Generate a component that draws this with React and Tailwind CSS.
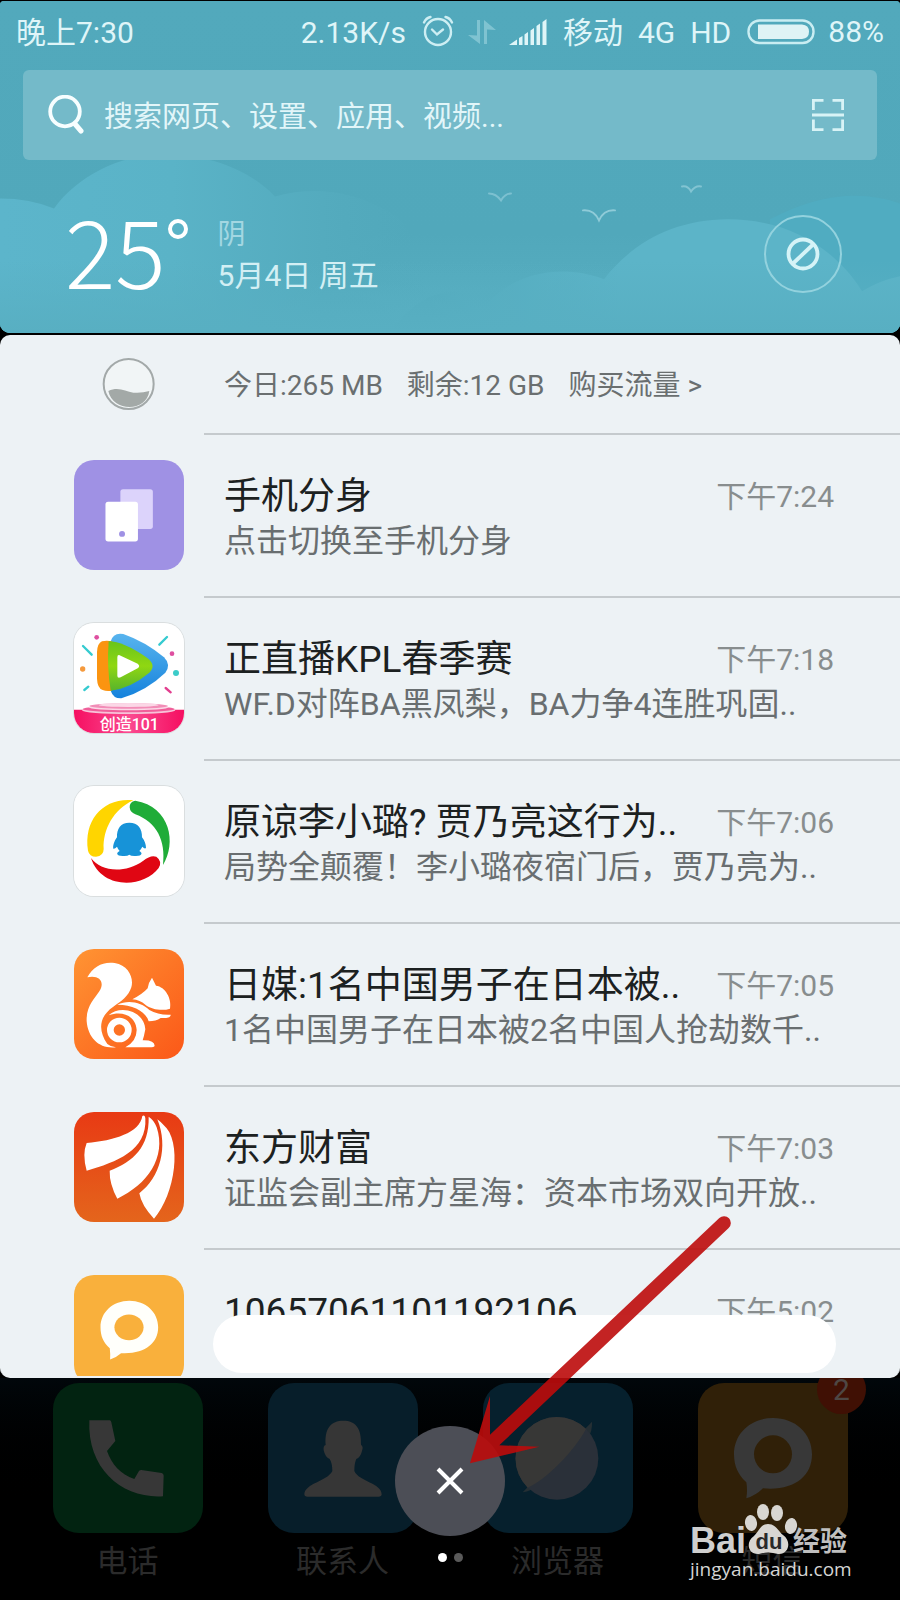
import React from "react";

const font = "font-['Roboto','Noto_Sans_CJK_SC',sans-serif]";

function Clouds() {
  return (
    <svg className="absolute inset-0 h-full w-full" viewBox="0 0 900 333" preserveAspectRatio="none" aria-hidden="true">
      <defs>
        <linearGradient id="sky" x1="0" y1="0" x2="0" y2="1">
          <stop offset="0" stopColor="#52a9bc" />
          <stop offset="0.7" stopColor="#51a8bb" />
          <stop offset="1" stopColor="#58afc2" />
        </linearGradient>
        <linearGradient id="cloud" gradientUnits="userSpaceOnUse" x1="430" y1="0" x2="620" y2="0">
          <stop offset="0" stopColor="#53aabd" />
          <stop offset="1" stopColor="#5cb4c8" />
        </linearGradient>
        <linearGradient id="cloudLeft" gradientUnits="userSpaceOnUse" x1="0" y1="0" x2="430" y2="0">
          <stop offset="0" stopColor="#5cb5cb" />
          <stop offset="0.4" stopColor="#5ab3c7" />
          <stop offset="0.75" stopColor="#54abbe" />
          <stop offset="1" stopColor="#52a9bc" stopOpacity="0" />
        </linearGradient>
        <linearGradient id="fade" x1="0" y1="0" x2="0" y2="1">
          <stop offset="0" stopColor="#58afc2" stopOpacity="0" />
          <stop offset="1" stopColor="#58afc2" />
        </linearGradient>
      </defs>
      <rect width="900" height="333" fill="url(#sky)" />
      <path d="M0 198Q30 198 54 208C78 176 118 154 165 154C211 154 250 170 275 196Q334 180 388 211C410 222 424 250 430 333H0Z" fill="url(#cloudLeft)" />
      <path d="M770 219Q840 182 900 203V333H770Z" fill="#50acc1" />
      <path d="M390 333Q420 290 455 292Q474 294 488 303C512 275 558 262 604 279C632 243 674 219 728 219C786 219 834 246 862 291Q880 280 900 276V333Z" fill="url(#cloud)" />
      <rect y="260" width="900" height="73" fill="url(#fade)" />
      <g fill="none" stroke="#8fcbd8" strokeWidth="2" strokeLinecap="round">
        <path d="M489 193Q496 193 501 200Q505 193 511 193" opacity="0.7" />
        <path d="M583 210Q594 209 599 220Q604 209 615 210" />
        <path d="M682 186Q688 185 691 191Q695 185 701 186" opacity="0.8" />
      </g>
    </svg>
  );
}

function StatusBar() {
  return (
    <div className="relative flex h-[62px] items-center px-[16px] text-[30px] leading-[36px] text-[#dff5f8]">
      <span className="pt-[2px]">晚上7:30</span>
      <span className="ml-auto pt-[2px]">2.13K/s</span>
      <svg className="ml-[16px] h-[34px] w-[32px]" viewBox="0 0 32 34" fill="none" stroke="#cdeef3" strokeWidth="2.4" strokeLinecap="round" aria-hidden="true">
        <circle cx="16" cy="17" r="13" />
        <path d="M10 14.500L15 19.500L21 14.500M2 7.500Q4 3 8.500 2M30 7.500Q28 3 23.500 2" />
      </svg>
      <svg className="ml-[14px] h-[28px] w-[28px]" viewBox="0 0 28 28" fill="#7fc3d1" aria-hidden="true">
        <path d="M9 2H12V26L0 17L9 17.500ZM16 2L28 12L19 11.500V26H16Z" />
      </svg>
      <svg className="ml-[13px] h-[26px] w-[38px]" viewBox="0 0 38 26" fill="#dff5f8" aria-hidden="true">
        <path d="M0 26L8 20.500V26ZM10 19L13.500 17V26H10ZM15.500 15.500L19 13V26H15.500ZM21.500 11.500L25 9V26H21.500ZM27.500 7L31 4.500V26H27.500ZM33.500 3L37.500 0V26H33.500Z" />
      </svg>
      <span className="ml-[16px] flex gap-[15px] pt-[2px]">
        <span>移动</span>
        <span>4G</span>
        <span>HD</span>
      </span>
      <svg className="ml-[16px] h-[26px] w-[68px]" viewBox="0 0 68 26" aria-hidden="true">
        <rect x="1.500" y="1.500" width="65" height="22.500" rx="11" fill="none" stroke="#c9edf2" strokeWidth="2.400" />
        <path d="M11 5.500H55Q62 6 62 12.800Q62 19.500 55 20H11Z" fill="#dff3f5" />
      </svg>
      <span className="ml-[13px]">88%</span>
    </div>
  );
}

function Header() {
  return (
    <header className="relative h-[332px] shrink-0 overflow-hidden rounded-t-[4px] rounded-b-[10px] bg-[#53a9bc]">
      <Clouds />
      <StatusBar />
      <div className="relative mx-[23px] mt-[7px] flex h-[90px] items-center rounded-[6px] bg-[#74bac9] pr-[32px] pl-[25px]">
        <svg className="h-[40px] w-[36px] shrink-0" viewBox="0 0 36 40" fill="none" stroke="#f7feff" strokeLinecap="round" aria-hidden="true">
          <circle cx="17" cy="16.500" r="14.800" strokeWidth="3.800" />
          <path d="M27 29L33 36" strokeWidth="5" />
        </svg>
        <input
          type="search"
          aria-label="搜索"
          placeholder="搜索网页、设置、应用、视频..."
          className="ml-[20px] h-[60px] min-w-0 flex-1 bg-transparent pt-[3px] text-[29px] text-white outline-none placeholder:text-[#e2f6f9]"
        />
        <button type="button" aria-label="扫一扫" className="h-[34px] w-[34px]">
          <svg viewBox="0 0 34 34" fill="none" stroke="#d8f3f6" strokeWidth="2.800" aria-hidden="true">
            <path d="M2.400 12V2.400H12.500M21.500 2.400H31.600V12M31.600 21.500V31.600H21.500M12.500 31.600H2.400V21.500M1 17H33" />
          </svg>
        </button>
      </div>
      <div className="relative flex h-[173px] items-center pt-[14px] pr-[58px] pl-[65px]">
        <div className="flex items-start pb-[12px] font-['Noto_Sans_CJK_SC',sans-serif] text-[94px] leading-[100px] font-light text-white">
          25
          <span className="mt-[21px] ml-[2px] h-[20px] w-[20px] rounded-full border-4 border-white" />
        </div>
        <div className="ml-[30px] pt-[3px] text-[30px] leading-[41px] text-[#d3eff4]">
          <div className="text-[28px] text-[#a3d7e2]">阴</div>
          <div>5月4日 周五</div>
        </div>
        <button type="button" aria-label="关闭天气" className="ml-auto flex h-[78px] w-[78px] items-center justify-center rounded-full border-2 border-[#93d2de]">
          <svg className="h-[36px] w-[36px]" viewBox="0 0 36 36" fill="none" stroke="#d5f3f7" strokeWidth="3.800" aria-hidden="true">
            <circle cx="18" cy="18" r="14.500" />
            <path d="M8 27.500L28 8.500" />
          </svg>
        </button>
      </div>
    </header>
  );
}

function DualPhoneIcon() {
  return (
    <svg viewBox="220 392 332 332" aria-hidden="true">
      <rect x="220" y="392" width="332" height="332" fill="#9f91e4" />
      <rect x="360" y="480" width="98" height="120" rx="8" fill="#dcd3fb" />
      <rect x="315" y="518" width="98" height="120" rx="8" fill="#fff" />
      <circle cx="365" cy="615" r="9" fill="#9f91e4" />
    </svg>
  );
}

function VideoIcon() {
  return (
    <svg viewBox="42 69 330 330" aria-hidden="true">
      <defs>
        <linearGradient id="vBlue" x1="0" y1="0" x2="0" y2="1">
          <stop offset="0" stopColor="#58b4ee" />
          <stop offset="1" stopColor="#1582dc" />
        </linearGradient>
        <linearGradient id="vGreen" x1="0" y1="0" x2="0" y2="1">
          <stop offset="0" stopColor="#69c41c" />
          <stop offset="0.5" stopColor="#90d712" />
          <stop offset="1" stopColor="#58b42b" />
        </linearGradient>
        <linearGradient id="vPink" x1="0" y1="0" x2="1" y2="0">
          <stop offset="0" stopColor="#f50f61" />
          <stop offset="0.5" stopColor="#fb4a90" />
          <stop offset="1" stopColor="#f50f61" />
        </linearGradient>
      </defs>
      <rect x="42" y="69" width="330" height="330" fill="#fff" />
      <path d="M152 124Q160 96 190 102Q258 126 312 172Q334 194 316 218Q260 272 184 295Q160 296 152 272Z" fill="url(#vBlue)" />
      <path d="M126 124Q112 130 111 156V236Q112 264 128 270Q140 275 156 272V124Q140 121 126 124Z" fill="#fb9410" />
      <path d="M146 124Q190 124 262 174Q290 196 268 218Q210 266 152 272Q140 198 146 124Z" fill="url(#vGreen)" />
      <path d="M172 172Q172 162 182 167L233 191Q242 198 233 205L182 232Q172 236 172 227Z" fill="#fff" />
      <g strokeWidth="7" strokeLinecap="round" stroke="#35cbd0">
        <path d="M298 134L321 111M69 138L95 164M73 270L85 260" />
        <path d="M317 264L332 277" stroke="#e23f8f" />
      </g>
      <circle cx="110" cy="112" r="7" fill="#de4fa0" />
      <circle cx="336" cy="161" r="7" fill="#de4fa0" />
      <circle cx="68" cy="207" r="8" fill="#f59a3d" />
      <circle cx="348" cy="219" r="9" fill="#3cccc9" />
      <path d="M42 329H372V399H42Z" fill="url(#vPink)" />
      <ellipse cx="206" cy="331" rx="140" ry="11" fill="#f7c3d8" />
      <ellipse cx="206" cy="327" rx="138" ry="10" fill="#f05f9a" />
      <ellipse cx="206" cy="322" rx="120" ry="9" fill="#fbd7e6" />
      <ellipse cx="206" cy="318" rx="118" ry="8" fill="#f28db7" />
      <ellipse cx="206" cy="315" rx="90" ry="6" fill="#fbd7e6" />
      <text x="208" y="391" textAnchor="middle" fontSize="48" fontWeight="500" fill="#fff">创造101</text>
    </svg>
  );
}

function NewsIcon() {
  return (
    <svg viewBox="42 558 330 330" aria-hidden="true">
      <rect x="42" y="558" width="330" height="330" fill="#fff" />
      <path d="M220 601C130 592 70 660 84 752Q88 770 108 770Q131 768 131 747C128 690 160 628 220 601Z" fill="#ffd500" />
      <path d="M226 602Q208 605 209 622Q210 637 226 643C290 666 318 722 309 795C350 730 332 620 226 602Z" fill="#1fac38" />
      <path d="M93 774C120 812 190 824 250 782Q272 764 289 770Q308 784 296 804C250 866 122 868 93 774Z" fill="#e00613" />
      <path d="M208 668C182 668 170 686 171 712C162 724 158 738 160 746Q164 748 171 740Q174 748 179 753C168 758 168 768 188 768Q203 769 208 764Q213 769 228 768C248 768 248 758 238 753Q243 748 247 740Q254 748 258 744C258 734 254 722 246 712C247 686 234 668 208 668Z" fill="#1793d8" />
    </svg>
  );
}

function BrowserSquirrelIcon() {
  return (
    <svg viewBox="42 55 330 330" aria-hidden="true">
      <defs>
        <linearGradient id="uc" x1="0" y1="0" x2="1" y2="1">
          <stop offset="0" stopColor="#ff9433" />
          <stop offset="1" stopColor="#fb5818" />
        </linearGradient>
      </defs>
      <rect x="42" y="55" width="330" height="330" fill="url(#uc)" />
      <path d="M82 140C100 106 130 92 164 97C206 104 222 142 214 170C206 196 184 212 160 228C116 258 114 300 142 340Q154 350 168 350C120 356 84 324 80 272C78 226 104 204 118 182C136 154 118 132 82 140Z" fill="#fff" />
      <path d="M217 206Q248 190 263 173Q266 154 276 141L288 165C316 168 336 204 330 234C306 242 274 236 256 222Q240 208 217 206Z" fill="#fff" />
      <path d="M172 222C206 206 246 216 268 238Q296 254 332 252Q334 264 302 262Q288 272 266 272C258 244 222 222 172 222Z" fill="#fff" />
      <path d="M146 254C178 222 252 238 256 296Q252 318 248 329Q284 328 284 346Q282 350 270 350H196Q230 332 230 298C228 258 190 238 146 254Z" fill="#fff" />
      <circle cx="178" cy="298" r="27" fill="none" stroke="#fff" strokeWidth="20" />
    </svg>
  );
}

function FortuneIcon() {
  return (
    <svg viewBox="42 544 330 330" aria-hidden="true">
      <defs>
        <linearGradient id="df" x1="0" y1="0" x2="0" y2="1">
          <stop offset="0" stopColor="#e83a14" />
          <stop offset="1" stopColor="#e4651c" />
        </linearGradient>
      </defs>
      <rect x="42" y="544" width="330" height="330" fill="url(#df)" />
      <path d="M247 556C240 606 162 630 80 637Q66 670 80 720C170 694 262 660 256 562Q254 552 247 556Z" fill="#fff" />
      <path d="M266 558C268 650 220 692 149 720Q148 760 172 804C262 762 320 680 290 590Q282 568 266 558Z" fill="#fff" />
      <path d="M292 566C326 650 300 740 238 788Q244 824 282 864C346 790 368 630 310 582Q300 572 292 566Z" fill="#fff" />
    </svg>
  );
}

function MessageIcon() {
  return (
    <svg viewBox="220 100 332 332" aria-hidden="true">
      <rect x="220" y="100" width="332" height="332" fill="#f9b03c" />
      <path d="M387 178C436 178 474 212 474 258C474 306 434 340 362 336Q346 350 329 355Q330 338 328 321C308 304 300 284 300 258C300 212 338 178 387 178Z" fill="#fffffb" />
      <ellipse cx="386" cy="258" rx="44" ry="39" fill="#f9b03c" />
    </svg>
  );
}

const notifications = [
  { icon: DualPhoneIcon, title: "手机分身", text: "点击切换至手机分身", time: "下午7:24" },
  { icon: VideoIcon, title: "正直播KPL春季赛", text: "WF.D对阵BA黑凤梨，BA力争4连胜巩固..", time: "下午7:18", outlined: true },
  { icon: NewsIcon, title: "原谅李小璐? 贾乃亮这行为..", text: "局势全颠覆！李小璐夜宿门后，贾乃亮为..", time: "下午7:06", outlined: true },
  { icon: BrowserSquirrelIcon, title: "日媒:1名中国男子在日本被..", text: "1名中国男子在日本被2名中国人抢劫数千..", time: "下午7:05" },
  { icon: FortuneIcon, title: "东方财富", text: "证监会副主席方星海：资本市场双向开放..", time: "下午7:03" },
  { icon: MessageIcon, title: "10657061101192106", text: "", time: "下午5:02" },
];

function Notification({ icon: Icon, title, text, time, outlined }) {
  return (
    <li className="flex h-[163px] items-stretch pl-[74px]">
      <div className={"my-auto h-[110px] w-[110px] shrink-0 overflow-hidden rounded-[20px] " + (outlined ? "ring-1 ring-[#dadedf]" : "")}>
        <Icon />
      </div>
      <div className="ml-[20px] flex min-w-0 flex-1 flex-col justify-center border-t-2 border-[#c5cacd] pt-[7px] pr-[66px] pl-[20px] whitespace-nowrap">
        <div className="flex items-center justify-between">
          <h2 className="text-[37px] leading-[44px] text-[#1c2121]">{title}</h2>
          <time className="text-[30px] leading-[44px] text-[#888d8e]">{time}</time>
        </div>
        <p className="h-[44px] text-[32px] leading-[44px] text-[#696e70]">{text}</p>
      </div>
    </li>
  );
}

function Panel() {
  return (
    <main className="relative z-10 mt-[2px] min-h-0 flex-1 overflow-hidden rounded-[10px] border-b-2 border-[#edf2f5] bg-[#edf2f5]">
      <div className="flex h-[98px] items-center pl-[102px] text-[28px] leading-[32px] text-[#6a6f70]">
        <svg className="h-[54px] w-[54px]" viewBox="306 84 162 162" aria-hidden="true">
          <circle cx="386" cy="165" r="75" fill="#f1f5f6" stroke="#a3a9a9" strokeWidth="6" />
          <path d="M325 186C356 172 376 188 400 191Q426 193 448 186C440 250 338 250 325 186Z" fill="#a3a9a7" />
        </svg>
        <div className="ml-[68px] flex gap-[24px] pt-[4px]">
          <span>今日:265 MB</span>
          <span>剩余:12 GB</span>
          <a href="#traffic">购买流量 &gt;</a>
        </div>
      </div>
      <ul>
        {notifications.map((n) => (
          <Notification key={n.time} {...n} />
        ))}
      </ul>
      <div className="absolute right-[64px] bottom-[3px] left-[213px] h-[58px] rounded-full bg-white" />
    </main>
  );
}

function PhoneApp() {
  return (
    <svg viewBox="158 428 450 450" aria-hidden="true">
      <rect x="158" y="428" width="450" height="450" fill="#022311" />
      <path d="M267 540H328Q332 540 333 546L345 602L320 632C334 672 360 702 402 716L416 692Q420 688 428 690L484 698Q490 700 490 706L488 768C370 776 260 690 267 540Z" fill="#373737" />
    </svg>
  );
}

function ContactsApp() {
  return (
    <svg viewBox="803 428 450 450" aria-hidden="true">
      <rect x="803" y="428" width="450" height="450" fill="#071e2a" />
      <path d="M1029 541C1066 541 1084 564 1082 614Q1090 618 1085 632Q1080 652 1068 656Q1062 668 1062 692C1076 724 1144 728 1144 762Q1144 769 1134 769H922Q912 769 912 762C914 728 980 724 996 692Q996 668 988 656Q974 650 970 630Q968 616 976 614C972 564 992 541 1029 541Z" fill="#363636" />
    </svg>
  );
}

function BrowserApp() {
  return (
    <svg viewBox="99 548 450 450" aria-hidden="true">
      <rect x="99" y="548" width="450" height="450" fill="#06202d" />
      <path d="M426 664L218 876Q244 872 262 856L412 716Q428 692 426 664Z" fill="#252f34" />
      <circle cx="321" cy="774" r="124" fill="#2a3039" />
      <path d="M408 686A124 124 0 1 0 233 862C286 840 370 756 408 686Z" fill="#373736" />
    </svg>
  );
}

function MessageApp() {
  return (
    <svg viewBox="743 548 450 450" aria-hidden="true">
      <rect x="743" y="548" width="450" height="450" fill="#302008" />
      <path d="M968 653C1034 653 1085 698 1085 762C1085 828 1032 872 938 864Q916 886 888 894Q892 870 888 846C864 824 851 798 851 762C851 698 902 653 968 653Z" fill="#383838" />
      <circle cx="968" cy="762" r="57" fill="#302008" />
    </svg>
  );
}

const apps = [
  { icon: PhoneApp, label: "电话" },
  { icon: ContactsApp, label: "联系人" },
  { icon: BrowserApp, label: "浏览器" },
  { icon: MessageApp, label: "短信", badge: "2" },
];

function Watermark() {
  return (
    <div className="absolute right-[48px] bottom-[18px] w-[162px] text-[#d5d5d4]">
      <svg className="h-[53px] w-[162px] overflow-visible" viewBox="0 0 162 53" role="img" aria-label="Baidu 经验">
        <text x="0" y="50" fontSize="36" fontWeight="700" fill="#cfcfce" fontFamily="Liberation Sans, sans-serif">Bai</text>
        <g fill="#d8d6d2">
          <ellipse cx="61" cy="20" rx="6" ry="8" transform="rotate(-8 61 20)" />
          <ellipse cx="73" cy="9" rx="6" ry="8" />
          <ellipse cx="87" cy="10" rx="6" ry="8" />
          <ellipse cx="101" cy="23" rx="6" ry="8" transform="rotate(10 101 23)" />
          <path d="M78 21C86 21 88 28 93 32C102 38 99 52 88 51Q78 48 69 51C58 52 55 39 64 33C69 29 70 21 78 21Z" />
        </g>
        <text x="79" y="46" textAnchor="middle" fontSize="22" fontWeight="700" fill="#292929" fontFamily="Liberation Sans, sans-serif">du</text>
        <text x="103" y="48" fontSize="27" fontWeight="700" fill="#bfbfbf">经验</text>
      </svg>
      <div className="font-['Open_Sans','Noto_Sans',sans-serif] text-[19px] leading-[26px]">jingyan.baidu.com</div>
    </div>
  );
}

function Dock() {
  return (
    <footer className="relative h-[222px] shrink-0 bg-linear-to-b from-[#01070b] from-0% to-black to-60%">
      <nav className="grid grid-cols-4 px-[20px] pt-[5px]">
        {apps.map(({ icon: Icon, label, badge }) => (
          <a key={label} href="#app" className="relative flex flex-col items-center text-[31px] leading-[44px] text-[#2b2b2b]">
            <span className="h-[150px] w-[150px] overflow-hidden rounded-[26px]">
              <Icon />
            </span>
            <span className="mt-[7px]">{label}</span>
            {badge && (
              <span className="absolute -top-[18px] right-[14px] flex h-[49px] w-[49px] items-center justify-center rounded-full bg-[#401004] text-[30px] text-[#4e4744]">
                {badge}
              </span>
            )}
          </a>
        ))}
      </nav>
      <div className="absolute inset-x-0 top-[48px] flex flex-col items-center">
        <button type="button" aria-label="关闭" className="flex h-[110px] w-[110px] items-center justify-center rounded-full bg-[#4c4e56]">
          <svg className="h-[30px] w-[30px]" viewBox="0 0 30 30" stroke="#fff" strokeWidth="4" aria-hidden="true">
            <path d="M3 3L27 27M27 3L3 27" />
          </svg>
        </button>
        <div className="mt-[17px] flex gap-[7px]">
          <span className="h-[9px] w-[9px] rounded-full bg-white" />
          <span className="h-[9px] w-[9px] rounded-full bg-[#5a5a5a]" />
        </div>
      </div>
      <Watermark />
    </footer>
  );
}

export default function App() {
  return (
    <div className={"relative flex h-screen min-h-[1200px] flex-col overflow-hidden bg-black pt-px " + font}>
      <Header />
      <Panel />
      <Dock />
      <svg className="pointer-events-none absolute bottom-[134px] left-1/2 z-20 ml-[20px] h-[250px] w-[264px]" viewBox="62 50 792 750" aria-hidden="true">
        <path d="M810 56A20 20 0 0 1 838 86L150 738L270 742L62 792L122 590L122 706Z" fill="#bd0b0b" fillOpacity="0.900" />
      </svg>
    </div>
  );
}
